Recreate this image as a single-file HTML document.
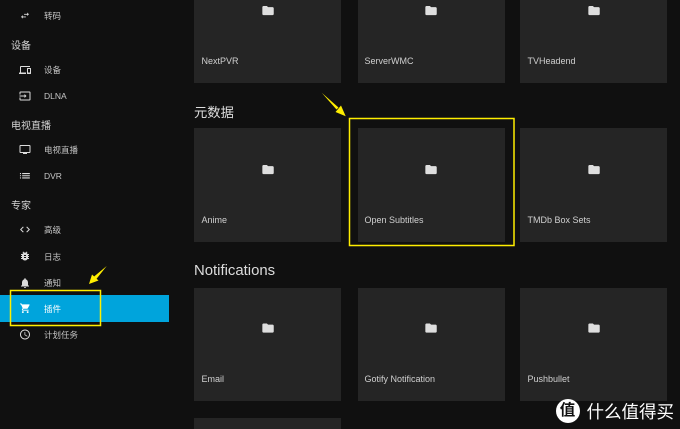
<!DOCTYPE html>
<html>
<head>
<meta charset="utf-8">
<style>
html,body{margin:0;padding:0;background:#101010;}
#p{position:relative;width:680px;height:429px;overflow:hidden;background:#101010;font-family:"Liberation Sans","Noto Sans CJK SC",sans-serif;filter:blur(.3px);}
.t{position:absolute;white-space:nowrap;line-height:14px;}
.nav{font-size:8.500px;color:#c6c6c6;left:44px;}
.sec{font-size:10px;color:#d4d4d4;left:11px;}
.h{color:#dcdcdc;left:194px;line-height:20px;}
.card{position:absolute;width:147px;background:#252525;}
.c1{left:194px}.c2{left:357.500px}.c3{left:520px}
.lb{position:absolute;font-size:9px;color:#d0d0d0;white-space:nowrap;line-height:12px;}
svg{position:absolute;overflow:visible;}
</style>
</head>
<body>
<div id="p">
<div style="position:absolute;left:0;top:295px;width:169px;height:27px;background:#00a4dc;"></div>

<div class="t nav" style="top:9px">转码</div>
<div class="t sec" style="top:40px">设备</div>
<div class="t nav" style="top:63px">设备</div>
<div class="t nav" style="top:89px">DLNA</div>
<div class="t sec" style="top:119.500px">电视直播</div>
<div class="t nav" style="top:143px">电视直播</div>
<div class="t nav" style="top:169px">DVR</div>
<div class="t sec" style="top:199.500px">专家</div>
<div class="t nav" style="top:223px">高级</div>
<div class="t nav" style="top:250px">日志</div>
<div class="t nav" style="top:276px">通知</div>
<div class="t nav" style="top:302px;color:#fff">插件</div>
<div class="t nav" style="top:328px">计划任务</div>

<!-- sidebar icons -->
<svg style="left:0;top:0" width="40" height="429" fill="#dcdcdc">
<path transform="translate(19.700 10.300) scale(.44)" d="M6.990 11L3 15l3.990 4v-3H14v-2H6.990v-3zM21 9l-3.990-4v3H10v2h7.010v3L21 9z"/>
<path transform="translate(19 64) scale(.5)" d="M4 6h18V4H4c-1.100 0-2 .9-2 2v11H0v3h14v-3H4V6zm19 2h-6c-.55 0-1 .45-1 1v10c0 .55.45 1 1 1h6c.55 0 1-.45 1-1V9c0-.55-.45-1-1-1zm-1 9h-4v-7h4v7z"/>
<path transform="translate(19 90) scale(.5)" d="M21 3.010H3c-1.100 0-2 .9-2 2V9h2V4.990h18v14.030H3V15H1v4.010c0 1.100.9 1.980 2 1.980h18c1.100 0 2-.88 2-1.980v-14c0-1.110-.9-2-2-2zM11 16l4-4-4-4v3H1v2h10v3z"/>
<path transform="translate(19 143.500) scale(.5)" d="M21 3H3c-1.100 0-2 .9-2 2v12c0 1.100.9 2 2 2h5v2h8v-2h5c1.100 0 1.990-.9 1.990-2L23 5c0-1.100-.9-2-2-2zm0 14H3V5h18v12z"/>
<path transform="translate(18.300 169.150) scale(.55)" d="M3 13h2v-2H3v2zm0 4h2v-2H3v2zm0-8h2V7H3v2zm4 4h14v-2H7v2zm0 4h14v-2H7v2zM7 7v2h14V7H7z"/>
<path transform="translate(19 223.500) scale(.5)" d="M9.400 16.600L4.800 12l4.600-4.600L8 6l-6 6 6 6 1.400-1.400zm5.200 0l4.600-4.600-4.600-4.600L16 6l6 6-6 6-1.400-1.400z"/>
<path transform="translate(19 250) scale(.5)" d="M20 8h-2.810c-.45-.78-1.070-1.450-1.820-1.960L17 4.410 15.590 3l-2.170 2.170C12.960 5.060 12.490 5 12 5c-.49 0-.96.06-1.410.17L8.410 3 7 4.410l1.620 1.630C7.880 6.550 7.260 7.220 6.810 8H4v2h2.090c-.05.33-.09.66-.09 1v1H4v2h2v1c0 .34.04.67.09 1H4v2h2.810c1.040 1.790 2.970 3 5.190 3s4.150-1.210 5.190-3H20v-2h-2.090c.05-.33.09-.66.09-1v-1h2v-2h-2v-1c0-.34-.04-.67-.09-1H20V8zm-6 8h-4v-2h4v2zm0-4h-4v-2h4v2z"/>
<path transform="translate(19 277) scale(.5)" d="M12 22c1.100 0 2-.9 2-2h-4c0 1.100.89 2 2 2zm6-6v-5c0-3.070-1.640-5.640-4.500-6.320V4c0-.83-.67-1.500-1.500-1.500s-1.500.67-1.500 1.500v.68C7.630 5.360 6 7.920 6 11v5l-2 2v1h16v-1l-2-2z"/>
<path fill="#fff" transform="translate(19.500 302.500) scale(.48)" d="M7 18c-1.100 0-1.990.9-1.990 2S5.900 22 7 22s2-.9 2-2-.9-2-2-2zM1 2v2h2l3.600 7.590-1.350 2.450c-.16.28-.25.61-.25.96 0 1.100.9 2 2 2h12v-2H7.420c-.14 0-.25-.11-.25-.25l.03-.12.9-1.630h7.450c.75 0 1.410-.41 1.750-1.030l3.580-6.490c.08-.14.12-.31.12-.48 0-.55-.45-1-1-1H5.210l-.94-2H1zm16 16c-1.100 0-1.990.9-1.990 2s.89 2 1.990 2 2-.9 2-2-.9-2-2-2z"/>
<path transform="translate(19 328.500) scale(.5)" d="M11.990 2C6.470 2 2 6.480 2 12s4.470 10 9.990 10C17.520 22 22 17.520 22 12S17.520 2 11.990 2zM12 20c-4.420 0-8-3.580-8-8s3.580-8 8-8 8 3.580 8 8-3.580 8-8 8zm.5-13H11v6l5.250 3.150.75-1.230-4.500-2.670z"/>
</svg>

<!-- section headings -->
<div class="t h" style="top:103px;font-size:13.300px">元数据</div>
<div class="t h" style="top:261px;font-size:14.900px">Notifications</div>

<!-- cards -->
<div class="card c1" style="top:-20px;height:103px"></div>
<div class="card c2" style="top:-20px;height:103px"></div>
<div class="card c3" style="top:-20px;height:103px"></div>
<div class="card c1" style="top:128px;height:114px"></div>
<div class="card c2" style="top:128px;height:114px"></div>
<div class="card c3" style="top:128px;height:114px"></div>
<div class="card c1" style="top:288px;height:113px"></div>
<div class="card c2" style="top:288px;height:113px"></div>
<div class="card c3" style="top:288px;height:113px"></div>
<div class="card c1" style="top:418px;height:30px"></div>

<div class="lb" style="left:201.500px;top:55px">NextPVR</div>
<div class="lb" style="left:364.500px;top:55px">ServerWMC</div>
<div class="lb" style="left:527.500px;top:55px">TVHeadend</div>
<div class="lb" style="left:201.500px;top:214px">Anime</div>
<div class="lb" style="left:364.500px;top:214px">Open Subtitles</div>
<div class="lb" style="left:527.500px;top:214px">TMDb Box Sets</div>
<div class="lb" style="left:201.500px;top:373px">Email</div>
<div class="lb" style="left:364.500px;top:373px">Gotify Notification</div>
<div class="lb" style="left:527.500px;top:373px">Pushbullet</div>

<!-- folder icons -->
<svg style="left:0;top:0" width="680" height="429" fill="#dedede">
<path transform="translate(261.200 3.700) scale(.57)" d="M10 4H4c-1.100 0-1.990.9-1.990 2L2 18c0 1.100.9 2 2 2h16c1.100 0 2-.9 2-2V8c0-1.100-.9-2-2-2h-8l-2-2z"/>
<path transform="translate(424.200 3.700) scale(.57)" d="M10 4H4c-1.100 0-1.990.9-1.990 2L2 18c0 1.100.9 2 2 2h16c1.100 0 2-.9 2-2V8c0-1.100-.9-2-2-2h-8l-2-2z"/>
<path transform="translate(587.200 3.700) scale(.57)" d="M10 4H4c-1.100 0-1.990.9-1.990 2L2 18c0 1.100.9 2 2 2h16c1.100 0 2-.9 2-2V8c0-1.100-.9-2-2-2h-8l-2-2z"/>
<path transform="translate(261.200 162.700) scale(.57)" d="M10 4H4c-1.100 0-1.990.9-1.990 2L2 18c0 1.100.9 2 2 2h16c1.100 0 2-.9 2-2V8c0-1.100-.9-2-2-2h-8l-2-2z"/>
<path transform="translate(424.200 162.700) scale(.57)" d="M10 4H4c-1.100 0-1.990.9-1.990 2L2 18c0 1.100.9 2 2 2h16c1.100 0 2-.9 2-2V8c0-1.100-.9-2-2-2h-8l-2-2z"/>
<path transform="translate(587.200 162.700) scale(.57)" d="M10 4H4c-1.100 0-1.990.9-1.990 2L2 18c0 1.100.9 2 2 2h16c1.100 0 2-.9 2-2V8c0-1.100-.9-2-2-2h-8l-2-2z"/>
<path transform="translate(261.200 321.200) scale(.57)" d="M10 4H4c-1.100 0-1.990.9-1.990 2L2 18c0 1.100.9 2 2 2h16c1.100 0 2-.9 2-2V8c0-1.100-.9-2-2-2h-8l-2-2z"/>
<path transform="translate(424.200 321.200) scale(.57)" d="M10 4H4c-1.100 0-1.990.9-1.990 2L2 18c0 1.100.9 2 2 2h16c1.100 0 2-.9 2-2V8c0-1.100-.9-2-2-2h-8l-2-2z"/>
<path transform="translate(587.200 321.200) scale(.57)" d="M10 4H4c-1.100 0-1.990.9-1.990 2L2 18c0 1.100.9 2 2 2h16c1.100 0 2-.9 2-2V8c0-1.100-.9-2-2-2h-8l-2-2z"/>
</svg>

<!-- yellow annotations -->
<svg style="left:0;top:0" width="680" height="429" fill="none">
<rect x="10.500" y="290.500" width="90" height="35" stroke="#ffee00" stroke-width="1.500"/>
<rect x="349.500" y="118.500" width="164.500" height="127" stroke="#ffee00" stroke-width="1.500"/>
<path d="M106.700 266L96 279.500 93.500 277z" fill="#ffee00"/>
<path d="M89 284L92 274.500 98.500 280.500z" fill="#ffee00"/>
<path d="M321.700 92.700L338.500 107.500 336.500 109.500z" fill="#ffee00"/>
<path d="M345.700 116.200L335.500 112 341 105.500z" fill="#ffee00"/>
</svg>

<!-- watermark -->
<div style="position:absolute;left:555.500px;top:399px;width:24px;height:24px;border-radius:50%;background:#fff;color:#111;font-size:15.500px;font-weight:bold;line-height:24px;text-align:center;">值</div>
<div class="t" style="left:586.500px;top:401.500px;font-size:17.500px;line-height:20px;color:#fff;">什么值得买</div>
</div>
</body>
</html>
